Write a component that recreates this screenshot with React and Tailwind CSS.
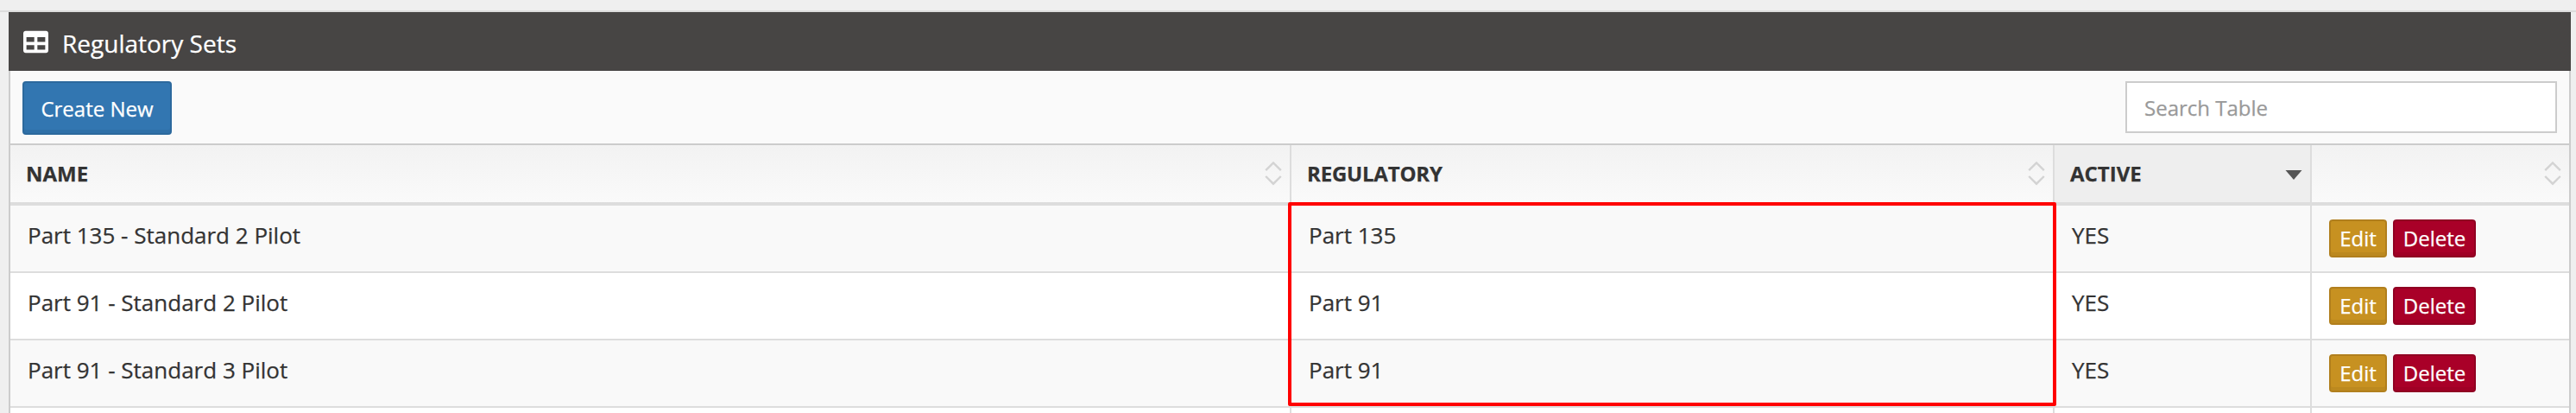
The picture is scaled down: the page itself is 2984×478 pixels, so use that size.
import React from "react";
import { FaTable } from "react-icons/fa";

const rows = [
  { name: "Part 135 - Standard 2 Pilot", regulatory: "Part 135" },
  { name: "Part 91 - Standard 2 Pilot", regulatory: "Part 91" },
  { name: "Part 91 - Standard 3 Pilot", regulatory: "Part 91" },
];

const grid = "grid grid-cols-[1484px_884px_298px_298px]";
const button = "rounded-[4px] border-2 text-[24px] text-white";

function SortIcon({ active }) {
  return (
    <svg className="h-[28px] w-[20px] shrink-0" viewBox="0 0 20 28" fill="none">
      {active ? (
        <path d="M0.5 10H19.5L10 21Z" fill="#555" />
      ) : (
        <path d="M1.2 10.2L10 1.5L18.8 10.2M1.2 17L10 25.7L18.8 17" stroke="#d3d3d3" strokeWidth="2.4" />
      )}
    </svg>
  );
}

function HeadCell({ label, active, last, tight }) {
  return (
    <div
      className={
        "flex items-center justify-between pr-[9px] pl-[18px] " +
        (last ? "" : "border-r-2 border-[#ddd] ") +
        (active ? "bg-[#eee]" : "bg-linear-to-b from-[#f2f2f2] to-[#fafafa]")
      }
    >
      <span className={"text-[24px] font-bold leading-[34px] " + (tight ? "tracking-[-0.2px]" : "")}>{label}</span>
      <SortIcon active={active} />
    </div>
  );
}

function Cell({ children, last }) {
  return (
    <div className={"pt-4 pl-5 text-[26px] leading-[36px] " + (last ? "" : "border-r-2 border-[#ddd]")}>
      {children}
    </div>
  );
}

export default function App() {
  return (
    <div className="h-[478px] w-[2984px] overflow-hidden bg-[#efefef] font-['Open_Sans',sans-serif] text-[#333] [-webkit-text-stroke:0.25px]">
      <div className="h-[14px] border-b-2 border-[#dcdcdc]" />
      <section className="ml-[10px] w-[2968px]">
        <header className="flex h-[68px] items-center bg-[#474544] pl-[17px] text-white">
          <FaTable className="mr-4 size-[29px] shrink-0" />
          <h2 className="pt-1 text-[28px] leading-[40px]">Regulatory Sets</h2>
        </header>
        <div className="border-x-2 border-[#ccc] bg-[#fafafa]">
          <div className="flex h-[86px] items-start justify-between border-b-2 border-[#ccc] px-[14px] pt-3">
            <button className="h-[62px] w-[173px] rounded-[4px] border-2 border-[#2c699d] bg-[#3276b1] pt-[1px] text-[24px] leading-[36px] whitespace-nowrap text-white shadow-[inset_0_-4px_0_rgba(0,0,0,0.05)]">
              Create New
            </button>
            <input
              placeholder="Search Table"
              className="h-[60px] w-[500px] border-2 border-[#ccc] bg-white px-5 text-[24px] placeholder:text-[#999]"
            />
          </div>
          <div className="relative">
            <div className={grid + " h-[70px] border-b-4 border-[#ddd]"}>
              <HeadCell label="NAME" />
              <HeadCell label="REGULATORY" tight />
              <HeadCell label="ACTIVE" active />
              <HeadCell label="" last />
            </div>
            {rows.map((row, i) => (
              <div
                key={row.name}
                className={grid + " h-[78px] border-b-2 border-[#ddd] " + (i % 2 ? "bg-white" : "bg-[#f9f9f9]")}
              >
                <Cell>{row.name}</Cell>
                <Cell>{row.regulatory}</Cell>
                <Cell>YES</Cell>
                <Cell last>
                  <div className="flex gap-[7px] leading-[38px]">
                    <button className={button + " h-[44px] w-[67px] border-[#b17f1d] bg-[#c79121] shadow-[inset_0_-4px_0_rgba(0,0,0,0.05)]"}>
                      Edit
                    </button>
                    <button className={button + " h-[44px] w-[96px] border-[#900022] bg-[#a90028] shadow-[inset_0_-4px_0_rgba(0,0,0,0.05)]"}>
                      Delete
                    </button>
                  </div>
                </Cell>
              </div>
            ))}
            <div className={grid + " h-[6px] overflow-hidden bg-white"}>
              <Cell />
              <Cell />
              <Cell />
              <Cell last />
            </div>
            <div className="absolute top-[66px] left-[1480px] h-[236px] w-[890px] rounded-[2px] border-4 border-[#ff0000]" />
          </div>
        </div>
      </section>
    </div>
  );
}
